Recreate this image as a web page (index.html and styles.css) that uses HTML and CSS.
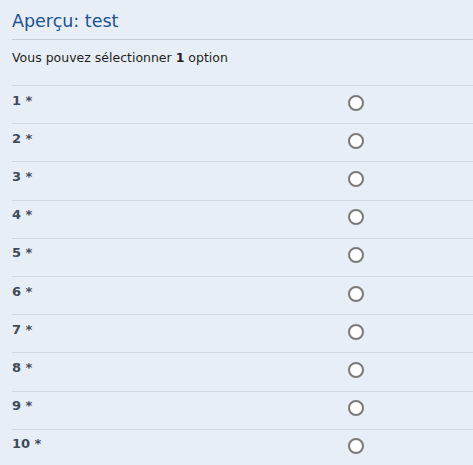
FILE: index.html
```html
<!DOCTYPE html>
<html lang="fr">
<head>
<meta charset="utf-8">
<title>Aperçu: test</title>
<link rel="stylesheet" href="styles.css">
</head>
<body>
<div class="page">
  <h1 class="title">Aperçu: test</h1>
  <p class="intro">Vous pouvez sélectionner <b>1</b> option</p>
  <div class="options">
    <div class="row"><span class="label">1 *</span><span class="cell"><span class="radio"></span></span></div>
    <div class="row"><span class="label">2 *</span><span class="cell"><span class="radio"></span></span></div>
    <div class="row"><span class="label">3 *</span><span class="cell"><span class="radio"></span></span></div>
    <div class="row"><span class="label">4 *</span><span class="cell"><span class="radio"></span></span></div>
    <div class="row"><span class="label">5 *</span><span class="cell"><span class="radio"></span></span></div>
    <div class="row"><span class="label">6 *</span><span class="cell"><span class="radio"></span></span></div>
    <div class="row"><span class="label">7 *</span><span class="cell"><span class="radio"></span></span></div>
    <div class="row"><span class="label">8 *</span><span class="cell"><span class="radio"></span></span></div>
    <div class="row"><span class="label">9 *</span><span class="cell"><span class="radio"></span></span></div>
    <div class="row"><span class="label">10 *</span><span class="cell"><span class="radio"></span></span></div>
  </div>
</div>
</body>
</html>
```
FILE: styles.css
```css
html, body {
  margin: 0;
  padding: 0;
  background: #e8eef5;
  overflow: hidden;
}
.page {
  padding-left: 12px;
  font-family: "DejaVu Sans", Verdana, sans-serif;
  color: #1e1e1e;
}
.title {
  margin: 0;
  padding-top: 9px;
  height: 30px;
  font-size: 17.5px;
  font-weight: normal;
  color: #1b5294;
  border-bottom: 1px solid #c4cbd3;
  line-height: 24px;
}
.intro {
  margin: 0;
  padding-top: 10px;
  height: 35px;
  font-size: 12.5px;
  line-height: 16px;
}
.intro b {
  font-weight: bold;
}
.row {
  display: grid;
  grid-template-columns: 1fr 1fr;
  height: 37.2px;
  border-top: 1px solid #d3d9e0;
  align-items: center;
}
.label {
  font-weight: bold;
  font-size: 13px;
  color: #3d4b5b;
  padding-bottom: 9px;
}
.cell {
  display: flex;
  justify-content: center;
  padding-right: 3px;
  padding-bottom: 4px;
}
.radio {
  box-sizing: border-box;
  width: 16px;
  height: 16px;
  border-radius: 50%;
  border: 2px solid #7a7a7a;
  background: #fff;
}
```
